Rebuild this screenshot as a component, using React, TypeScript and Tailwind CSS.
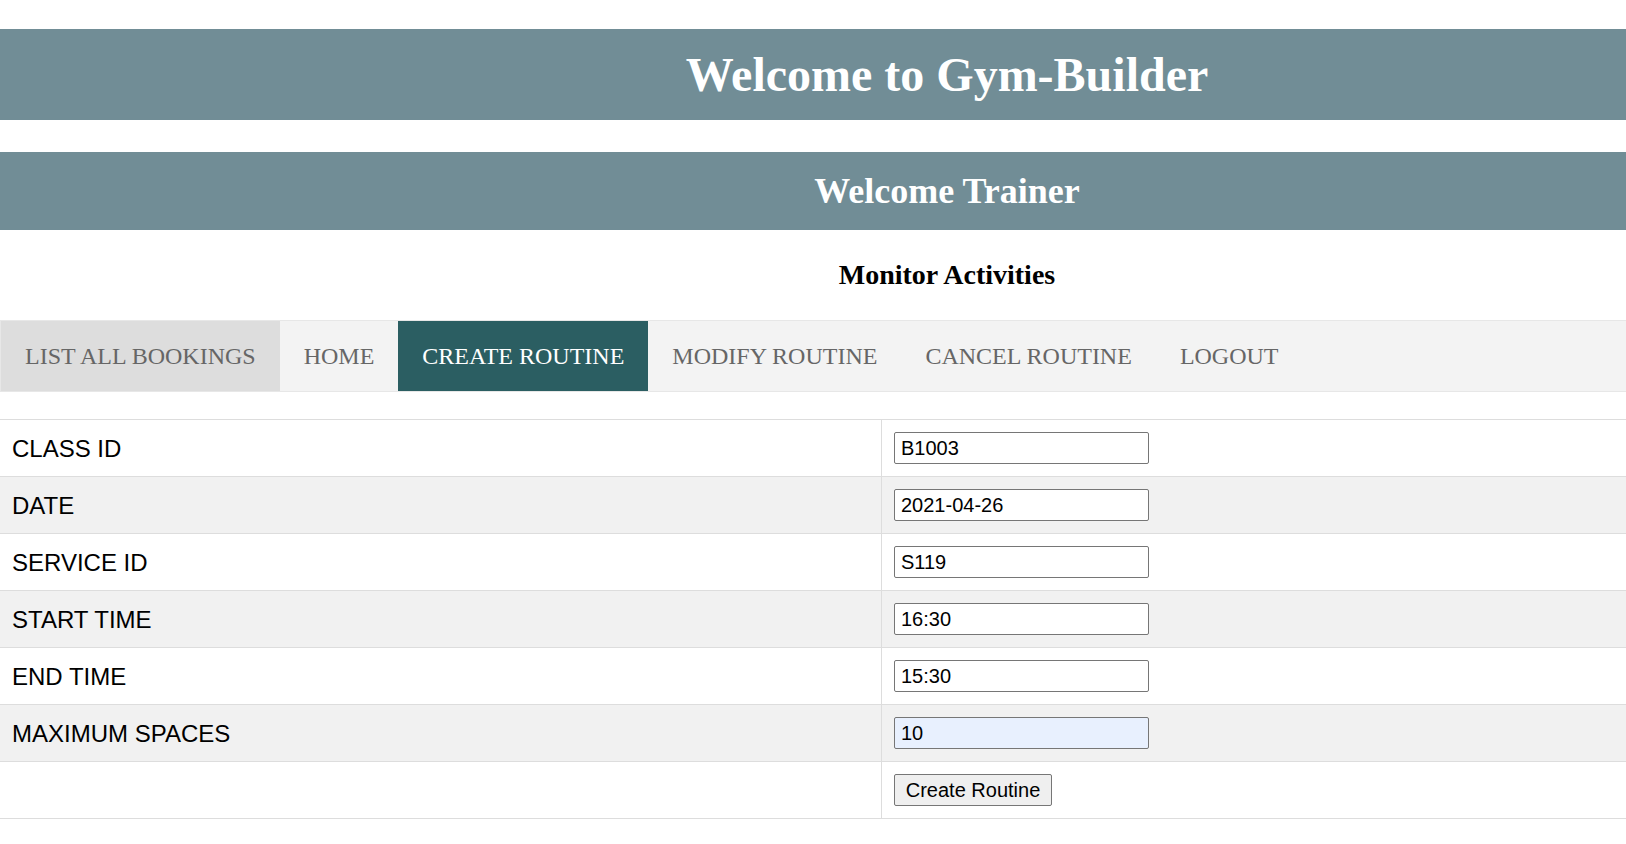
import React from 'react';

const navItems = [
  { label: 'LIST ALL BOOKINGS', state: 'hover' },
  { label: 'HOME', state: 'idle' },
  { label: 'CREATE ROUTINE', state: 'active' },
  { label: 'MODIFY ROUTINE', state: 'idle' },
  { label: 'CANCEL ROUTINE', state: 'idle' },
  { label: 'LOGOUT', state: 'idle' },
];

const fields = [
  { label: 'CLASS ID', value: 'B1003' },
  { label: 'DATE', value: '2021-04-26' },
  { label: 'SERVICE ID', value: 'S119' },
  { label: 'START TIME', value: '16:30' },
  { label: 'END TIME', value: '15:30' },
  { label: 'MAXIMUM SPACES', value: '10', autofilled: true },
];

const serif = "font-['Liberation_Serif','Times_New_Roman',serif]";
const sans = "font-['Liberation_Sans',Arial,sans-serif]";

export default function App() {
  return (
    <div className="min-h-screen bg-white pt-[29px]">
      <h1
        className={`${serif} bg-[#718d96] py-[18px] pl-[268px] text-center text-[48px] font-bold leading-[55px] text-white`}
      >
        Welcome to Gym-Builder
      </h1>

      <h2
        className={`${serif} mt-[32px] bg-[#718d96] py-[19px] pl-[268px] text-center text-[36px] font-bold leading-[40px] text-white`}
      >
        Welcome Trainer
      </h2>

      <h3
        className={`${serif} py-[29px] pl-[268px] text-center text-[28px] font-bold leading-[32px] text-black`}
      >
        Monitor Activities
      </h3>

      <ul className={`${serif} flex border-y border-l border-[#e7e7e7] bg-[#f3f3f3]`}>
        {navItems.map((item) => (
          <li
            key={item.label}
            className={
              item.state === 'active'
                ? 'bg-[#2b5e62] px-[24px] py-[21px] text-[24px] leading-[28px] text-white'
                : item.state === 'hover'
                  ? 'bg-[#dddddd] px-[24px] py-[21px] text-[24px] leading-[28px] text-[#666666]'
                  : 'px-[24px] py-[21px] text-[24px] leading-[28px] text-[#666666]'
            }
          >
            {item.label}
          </li>
        ))}
      </ul>

      <form className={`${sans} mt-[27px] border-b border-[#dddddd]`}>
        {fields.map((f, i) => (
          <div
            key={f.label}
            className={`grid grid-cols-[881px_1fr] border-t border-[#dddddd] ${i % 2 === 1 ? 'bg-[#f1f1f1]' : 'bg-white'}`}
          >
            <div className="flex items-center pl-[12px] pt-[1px] text-[24px] text-black">{f.label}</div>
            <div className="border-l border-[#dddddd] px-[12px] py-[12px]">
              <input
                readOnly
                value={f.value}
                className={`block h-[32px] w-[255px] rounded-[2px] border border-[#767676] px-[6px] text-[20px] text-black outline-none ${f.autofilled ? 'bg-[#e8f0fe]' : 'bg-white'}`}
              />
            </div>
          </div>
        ))}
        <div className="grid grid-cols-[881px_1fr] border-t border-[#dddddd] bg-white">
          <div />
          <div className="border-l border-[#dddddd] px-[12px] py-[12px]">
            <button
              type="button"
              className="h-[32px] w-[158px] rounded-[2px] border border-[#767676] bg-[#efefef] text-[20px] text-black"
            >
              Create Routine
            </button>
          </div>
        </div>
      </form>
    </div>
  );
}
